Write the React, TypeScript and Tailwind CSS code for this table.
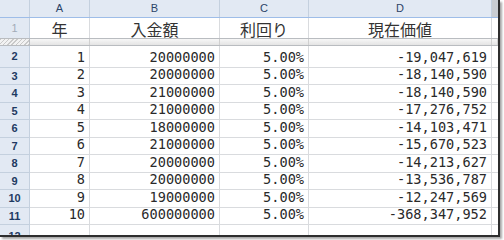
import React from 'react'

const rows = [
    [1, '20000000', '5.00%', '-19,047,619'],
    [2, '20000000', '5.00%', '-18,140,590'],
    [3, '21000000', '5.00%', '-18,140,590'],
    [4, '21000000', '5.00%', '-17,276,752'],
    [5, '18000000', '5.00%', '-14,103,471'],
    [6, '21000000', '5.00%', '-15,670,523'],
    [7, '20000000', '5.00%', '-14,213,627'],
    [8, '20000000', '5.00%', '-13,536,787'],
    [9, '19000000', '5.00%', '-12,247,569'],
    [10, '600000000', '5.00%', '-368,347,952'],
]

const grid = 'grid grid-cols-[30px_60px_130px_89px_183px_6px]'
const hdrCell = 'bg-[#e2e9f3] border-r border-[#c4d0de] flex items-center justify-center'
const cell = 'border-r border-b border-[#d9dbde] bg-white flex items-end justify-end pr-[4px] leading-none pb-[2px]'
const mono = { fontFamily: '"DejaVu Sans Mono", "Liberation Mono", monospace' }

export default function App() {
    return (
        <div className="w-[504px] h-[240px] bg-white overflow-hidden">
            <div
                className="w-[500px] h-[237px] border-r-2 border-b-2 border-[#2e2e2e] shadow-[2px_2px_2px_rgba(0,0,0,0.35)] overflow-hidden text-[#222]"
                style={{ fontFamily: '"Liberation Sans", Arial, sans-serif' }}
            >
                {/* column letters */}
                <div className={`${grid} h-[18px] text-[11px] text-[#2b4467] border-b border-[#9ebde8]`}>
                    <div className={hdrCell} />
                    {['A', 'B', 'C', 'D'].map(l => (
                        <div key={l} className={hdrCell}>{l}</div>
                    ))}
                    <div className="bg-[#c9cdd2]" />
                </div>

                {/* row 1: titles */}
                <div className={`${grid} h-[20px]`}>
                    <div className="bg-[#e2e9f3] border-r border-[#c4d0de] flex items-center justify-center text-[11px] text-[#a3acb8]">1</div>
                    {['年', '入金額', '利回り', '現在価値'].map(t => (
                        <div
                            key={t}
                            className="border-r border-[#d9dbde] bg-white flex items-end justify-center text-[16px] leading-none pb-[1px] text-[#333]"
                            style={{ fontFamily: '"Noto Sans CJK JP", sans-serif' }}
                        >
                            {t}
                        </div>
                    ))}
                    <div className="bg-white" />
                </div>

                {/* frozen split band */}
                <div className={`${grid} h-[8px] border-y border-[#b9bcc0]`}>
                    <div className="bg-[repeating-linear-gradient(135deg,#c9c9c9_0px,#c9c9c9_1px,#f2f2f2_1px,#f2f2f2_3px)] border-r border-[#b9bcc0]" />
                    {[0, 1, 2, 3, 4].map(i => (
                        <div key={i} className="bg-gradient-to-b from-[#f7f7f7] to-[#e4e4e4] border-r border-[#d0d0d0]" />
                    ))}
                </div>

                {/* data rows */}
                {rows.map((r, i) => (
                    <div key={i} className={`${grid} ${i === 0 ? 'h-[21.5px]' : 'h-[17.5px]'}`}>
                        <div className={`${hdrCell} border-b text-[11px] font-bold text-[#1e3a62]`}>{i + 2}</div>
                        {r.map((v, j) => (
                            <div key={j} className={`${cell} text-[13.6px] text-[#2a2a2a]`} style={mono}>
                                {v}
                            </div>
                        ))}
                        <div className="bg-white border-b border-[#d9dbde]" />
                    </div>
                ))}

                {/* row 12 (cut) */}
                <div className={`${grid} h-[20px]`}>
                    <div className={`${hdrCell} items-start pt-[3px] text-[11px] font-bold text-[#1e3a62]`}>12</div>
                    {[0, 1, 2, 3].map(j => (
                        <div key={j} className="border-r border-[#d9dbde] bg-white" />
                    ))}
                    <div className="bg-white" />
                </div>
            </div>
        </div>
    )
}
